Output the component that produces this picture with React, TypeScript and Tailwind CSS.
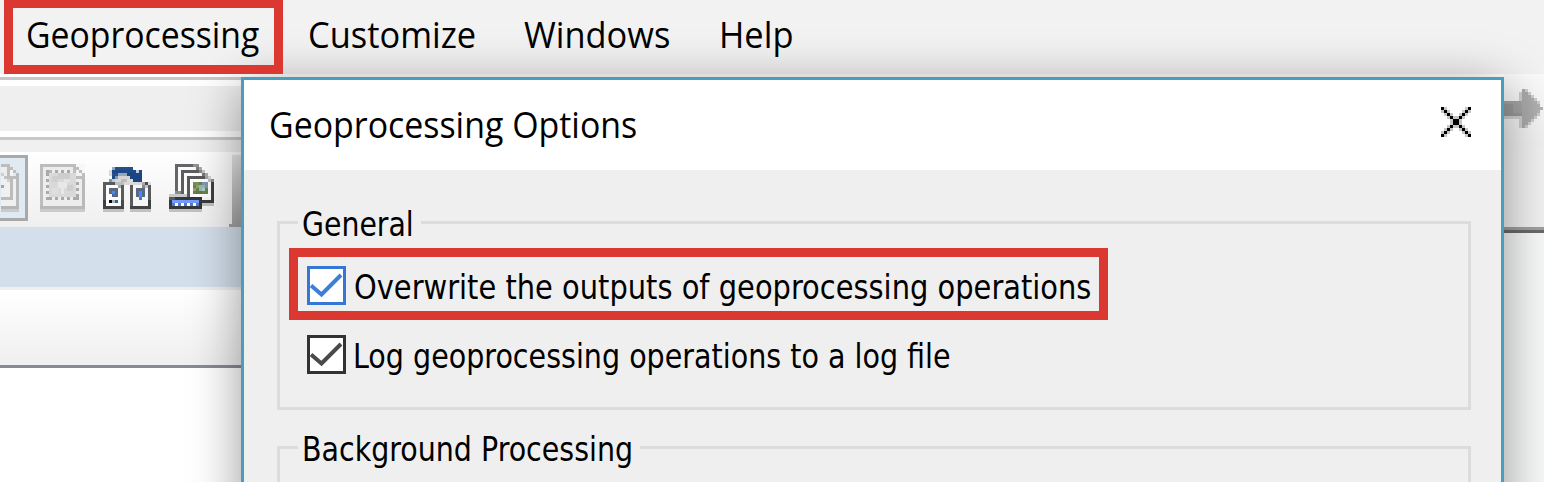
import type { ReactNode } from "react";

type Px = [number, number, number, number, string];

function PixelArt({ cols, rows, px, className }: { cols: number; rows: number; px: Px[]; className: string }) {
  return (
    <svg viewBox={`0 0 ${cols} ${rows}`} className={className} shapeRendering="crispEdges" aria-hidden="true">
      {px.map(([x, y, w, h, fill], i) => (
        <rect key={i} x={x} y={y} width={w} height={h} fill={fill} />
      ))}
    </svg>
  );
}

const layoutPage: Px[] = [
  [0, 0, 3, 1, "#bdbdbd"], [0, 1, 2, 13, "#ededed"], [0, 4, 5, 10, "#f0f0f0"],
  [2, 0, 1, 4, "#bdbdbd"], [3, 1, 1, 1, "#bdbdbd"], [3, 2, 1, 2, "#f4f4f4"], [4, 2, 1, 1, "#bdbdbd"],
  [2, 4, 3, 1, "#bdbdbd"], [5, 3, 1, 12, "#bababa"], [0, 14, 6, 1, "#b6b6b6"], [0, 15, 6, 1, "#c5cbd0"],
  [0, 3, 1, 1, "#cfcfcf"], [1, 4, 1, 1, "#c4c4c4"], [2, 5, 1, 1, "#d0d0d0"],
  [3, 5, 1, 7, "#bcbcbc"], [0, 11, 4, 1, "#bcbcbc"], [0, 7, 1, 1, "#a5a5a5"],
];

const selectPage: Px[] = [
  [1, 1, 13, 13, "#ededed"], [0, 0, 12, 1, "#bdbdbd"], [0, 0, 1, 15, "#bdbdbd"],
  [14, 4, 1, 11, "#bababa"], [0, 14, 15, 1, "#b8b8b8"], [0, 15, 15, 1, "#cbcbcb"],
  [12, 0, 3, 3, "#f7f7f7"], [11, 0, 1, 4, "#bdbdbd"], [12, 1, 1, 1, "#bdbdbd"], [13, 2, 1, 1, "#bdbdbd"],
  [12, 2, 1, 1, "#f2f2f2"], [12, 3, 2, 1, "#f2f2f2"], [14, 3, 1, 1, "#bdbdbd"], [11, 4, 4, 1, "#bdbdbd"],
  [3, 3, 9, 8, "#d9d9d9"], [4, 4, 2, 2, "#cfcfcf"], [6, 3, 4, 2, "#cdcdcd"], [6, 6, 3, 2, "#e8e8e8"],
  [8, 5, 2, 1, "#e3e3e3"], [7, 8, 1, 2, "#e8e8e8"], [9, 7, 2, 2, "#cecece"], [4, 8, 2, 2, "#dfdfdf"],
  [2, 2, 1, 2, "#a9a9a9"], [3, 2, 1, 1, "#b5b5b5"], [5, 2, 1, 1, "#a9a9a9"], [7, 2, 1, 1, "#a9a9a9"], [9, 2, 1, 1, "#a9a9a9"],
  [2, 5, 1, 1, "#a9a9a9"], [2, 7, 1, 1, "#a9a9a9"], [2, 9, 1, 1, "#a9a9a9"], [2, 11, 2, 1, "#a9a9a9"],
  [5, 11, 1, 1, "#a9a9a9"], [7, 11, 1, 1, "#a9a9a9"], [9, 11, 1, 1, "#a9a9a9"], [11, 11, 2, 1, "#a9a9a9"],
  [12, 6, 1, 1, "#a9a9a9"], [12, 8, 1, 1, "#a9a9a9"], [12, 10, 1, 1, "#a9a9a9"],
];

const transfer: Px[] = [
  [4, 1, 6, 1, "#23508a"], [3, 2, 8, 1, "#1d4a86"], [12, 2, 1, 1, "#1d4a86"], [11, 2, 1, 1, "#bccbe0"],
  [3, 1, 1, 1, "#91a7c6"], [2, 2, 1, 2, "#d5dbe3"], [3, 3, 2, 1, "#23508a"], [5, 3, 3, 1, "#96a5b8"], [8, 3, 5, 1, "#1b4580"],
  [3, 4, 1, 1, "#1d4a86"], [4, 4, 1, 1, "#8096b3"], [5, 4, 4, 1, "#d4d4d4"], [9, 4, 4, 1, "#1b4580"],
  [2, 5, 1, 1, "#7d94b5"], [3, 5, 1, 1, "#c4c9d0"], [4, 5, 2, 1, "#d6d6d6"], [6, 5, 2, 1, "#bbbbbb"], [8, 5, 2, 1, "#dddddd"], [10, 5, 3, 1, "#1b4580"],
  [0, 6, 7, 9, "#5b5b5d"], [1, 7, 5, 7, "#fdfdfd"], [4, 6, 3, 1, "#bdbdbd"], [5, 7, 1, 1, "#a5a5a5"], [0, 12, 1, 3, "#3e3f41"], [6, 12, 1, 3, "#48494b"], [0, 14, 7, 1, "#434446"],
  [2, 8, 3, 2, "#586986"], [3, 10, 2, 1, "#586986"], [3, 9, 1, 1, "#3f8cff"],
  [2, 12, 1, 1, "#080808"], [3, 12, 1, 1, "#aeb2b6"], [4, 12, 1, 1, "#31669b"], [0, 15, 7, 1, "#c1c1c1"],
  [9, 6, 7, 9, "#5b5b5d"], [10, 7, 5, 7, "#f6f6f6"], [7, 6, 6, 1, "#d9d9d9"], [13, 6, 1, 1, "#a8a8a8"], [14, 6, 1, 1, "#4b4b4b"], [15, 6, 1, 1, "#dddddd"], [13, 7, 1, 1, "#898989"], [14, 7, 1, 1, "#c2c2c2"],
  [11, 8, 3, 3, "#586986"], [12, 9, 1, 2, "#3f8cff"], [12, 11, 1, 1, "#657590"], [15, 12, 1, 3, "#3e3f41"], [9, 14, 7, 1, "#434446"], [9, 15, 7, 1, "#c1c1c1"],
];

const pageStack: Px[] = [
  [2, 0, 8, 11, "#666668"], [3, 1, 7, 10, "#fbfbfb"], [8, 0, 2, 1, "#929292"], [10, 1, 1, 1, "#a8a8a8"], [9, 1, 1, 1, "#7b7b7b"],
  [4, 2, 8, 9, "#5d5d5f"], [5, 3, 7, 8, "#fbfbfb"], [10, 2, 1, 1, "#898989"], [11, 2, 1, 1, "#c2c2c2"], [11, 3, 1, 1, "#777777"], [12, 3, 1, 1, "#aaaaaa"],
  [6, 4, 7, 8, "#58595b"], [12, 4, 1, 1, "#a4a4a4"], [7, 5, 7, 7, "#fefefe"], [13, 4, 1, 1, "#d0d0d0"],
  [13, 5, 1, 1, "#bdbdbd"], [14, 5, 1, 1, "#8b8b8b"], [14, 6, 1, 7, "#3e3f41"], [11, 12, 4, 1, "#3b3c3e"], [11, 11, 3, 1, "#f8f8f8"], [11, 13, 4, 1, "#c1c1c1"],
  [8, 6, 5, 4, "#698249"], [8, 6, 2, 1, "#7b9055"], [11, 6, 2, 2, "#8095b5"], [10, 7, 2, 2, "#90b7b6"], [9, 7, 1, 1, "#8ba65f"], [11, 8, 1, 1, "#a5cfc7"], [9, 9, 2, 1, "#647a36"], [8, 8, 1, 1, "#92a169"],
  [2, 9, 2, 1, "#8c8c8c"], [0, 10, 6, 1, "#c9c9c9"],
  [0, 11, 11, 4, "#35373b"], [0, 11, 2, 1, "#58595b"], [1, 12, 9, 1, "#719bff"], [1, 13, 9, 1, "#527dc5"],
  [2, 13, 1, 1, "#ffffff"], [4, 13, 1, 1, "#ffffff"], [6, 13, 1, 1, "#ffffff"], [8, 13, 1, 1, "#ffffff"], [0, 15, 11, 1, "#c1c1c1"],
];

const forwardArrow: Px[] = [
  [0, 4, 6, 5, "#999999"], [0, 4, 6, 1, "#a4a4a4"], [3, 5, 4, 3, "#a3a3a3"], [0, 9, 6, 1, "#d0d0d0"], [5, 1, 1, 3, "#cdcdcd"], [5, 9, 1, 4, "#cdcdcd"],
  [6, 0, 1, 13, "#a9a9a9"], [7, 1, 1, 11, "#a9a9a9"], [8, 2, 1, 9, "#ababab"], [9, 3, 1, 7, "#adadad"], [10, 4, 1, 5, "#afafaf"], [11, 5, 1, 3, "#b1b1b1"], [12, 6, 1, 1, "#b4b4b4"],
  [7, 0, 1, 1, "#cccccc"], [8, 1, 1, 1, "#cccccc"], [9, 2, 1, 1, "#cccccc"], [10, 3, 1, 1, "#cccccc"], [11, 4, 1, 1, "#cccccc"],
  [7, 12, 1, 1, "#cccccc"], [8, 11, 1, 1, "#cccccc"], [9, 10, 1, 1, "#cccccc"], [10, 9, 1, 1, "#cccccc"], [11, 8, 1, 1, "#cccccc"],
];

const closeCross: Px[] = Array.from({ length: 9 }).flatMap((_, i): Px[] => [
  [i + 1, i, 1, 1, "#c6c6c6"], [i, i + 1, 1, 1, "#c6c6c6"],
  [8 - i, i, 1, 1, "#c6c6c6"], [9 - i, i + 1, 1, 1, "#c6c6c6"],
]).concat(
  Array.from({ length: 10 }).flatMap((_, i): Px[] => [[i, i, 1, 1, "#000000"], [9 - i, i, 1, 1, "#000000"]]),
);

function Checkbox({ label, accent, textClass }: { label: string; accent: boolean; textClass: string }) {
  return (
    <label className="flex h-[39px] items-start">
      <span className={accent ? "size-[39px] shrink-0 border-[3px] border-[#3477d4] bg-white" : "size-[39px] shrink-0 border-[3px] border-[#323232] bg-white"}>
        <svg viewBox="0 0 33 33" className="size-[33px]" fill="none" stroke={accent ? "#3d7fd6" : "#4a4a4a"} strokeWidth="4">
          <path d="M1 16.5 L11.5 25.5 L31 6" />
        </svg>
      </span>
      <span className={textClass}>{label}</span>
    </label>
  );
}

function Group({ title, titleClass, className, children }: { title: string; titleClass: string; className: string; children?: ReactNode }) {
  return (
    <section className={className}>
      <div className="flex h-[39px] items-start">
        <span className="mt-[18px] h-[3px] w-[21px] bg-[#dcdcdc]" />
        <h2 className={titleClass}>{title}</h2>
        <span className="mt-[18px] h-[3px] flex-1 bg-[#dcdcdc]" />
      </div>
      <div className="-mt-[18px] flex-1 border-x-[3px] border-b-[3px] border-[#dcdcdc]">{children}</div>
    </section>
  );
}

export default function App() {
  return (
    <div className="relative flex h-[482px] w-[1544px] flex-col overflow-hidden bg-white font-['Open_Sans',sans-serif] text-black">
      <nav className="flex h-[74px] shrink-0 bg-[#f2f2f2] pl-[4px]">
        <div className="relative z-10 h-[74px] w-[279px] border-x-9 border-t-8 border-b-9 border-[#db3832] pl-[13px]">
          <span className="-mt-px block origin-left scale-x-[0.912] text-[37px] leading-[53px] whitespace-nowrap">Geoprocessing</span>
        </div>
        <div className="relative z-10 flex pt-[7px] pl-[25px] text-[37px] leading-[53px] whitespace-nowrap">
          <span className="w-[216px] origin-left scale-x-[0.93]">Customize</span>
          <span className="w-[195px] origin-left scale-x-[0.93]">Windows</span>
          <span className="origin-left scale-x-[0.93]">Help</span>
        </div>
      </nav>
      <div className="flex flex-1 justify-between">
        <div className="flex w-[241px] flex-col">
          <div className="mt-[3px] h-[3px] bg-[#c8c8c8]" />
          <div className="mt-[6px] h-[45px] bg-[#efefef]" />
          <div className="mt-[6px] h-[3px] bg-[#c8c8c8]" />
          <div className="h-[12px] bg-[#f0f0f0]" />
          <div className="flex h-[75px] bg-gradient-to-b from-white to-[#efefef]">
            <div className="mt-[3px] h-[66px] w-[28px] border-y-[3px] border-r-[3px] border-[#a9a9a9] bg-[#e0eaf3] pt-[6px]">
              <PixelArt cols={6} rows={16} px={layoutPage} className="ml-[1px] h-[48px] w-[18px]" />
            </div>
            <PixelArt cols={15} rows={16} px={selectPage} className="mt-[12px] ml-[12px] h-[48px] w-[45px]" />
            <PixelArt cols={16} rows={16} px={transfer} className="mt-[12px] ml-[18px] h-[48px] w-[48px]" />
            <PixelArt cols={15} rows={16} px={pageStack} className="mt-[12px] ml-[18px] h-[48px] w-[45px]" />
            <div className="ml-auto h-[3px] w-[3px] self-end bg-[#a0a0a0]" />
            <div className="mt-[3px] w-[9px] bg-gradient-to-b from-[#e8e8e8] to-[#a0a0a0]" />
          </div>
          <div className="h-[60px] bg-[#d3dfeb]" />
          <div className="h-[3px] bg-[#f0f0f0]" />
          <div className="h-[75px] bg-gradient-to-b from-white to-[#efefef]" />
          <div className="h-[3px] bg-[#868a94]" />
        </div>
        <div className="flex w-[40px] flex-col bg-[#f6f9f8]">
          <div className="h-[73px] bg-gradient-to-b from-[#fafafa] to-[#f0f0f0] pt-[15px]">
            <PixelArt cols={13} rows={13} px={forwardArrow} className="h-[39px] w-[39px]" />
          </div>
          <div className="h-[80px] bg-[#f1f1f1]" />
          <div className="h-[3px] bg-[#a0a0a0]" />
          <div className="h-[3px] bg-[#696969]" />
        </div>
      </div>
      <div className="absolute top-[77px] left-[241px] flex h-[460px] w-[1263px] flex-col border-[3px] border-[#4a9dbd] bg-[#efefef] shadow-[0_10px_48px_rgba(0,0,0,0.4)]">
        <header className="flex h-[90px] shrink-0 items-start justify-between bg-white pr-[30px] pl-[25px]">
          <h1 className="mt-[17px] origin-left scale-x-[0.916] text-[37px] leading-[53px] whitespace-nowrap">Geoprocessing Options</h1>
          <button aria-label="Close" className="mt-[27px]">
            <PixelArt cols={10} rows={10} px={closeCross} className="size-[30px]" />
          </button>
        </header>
        <div className="flex flex-col pr-[30px] pl-[33px] font-['DejaVu_Sans_Condensed','DejaVu_Sans',sans-serif]">
          <Group
            title="General"
            titleClass="mt-[2px] ml-[4px] w-[119px] origin-left scale-x-[0.955] text-[33px] leading-[39px] whitespace-nowrap"
            className="mt-[33px] flex h-[207px] flex-col"
          >
            <div className="mt-[24px] ml-[9px] h-[72px] w-[819px] border-9 border-[#db3832] pt-[9px] pl-[9px]">
              <Checkbox
                accent
                label="Overwrite the outputs of geoprocessing operations"
                textClass="mt-[2px] ml-[8px] origin-left scale-x-[0.974] text-[33px] leading-[39px] whitespace-nowrap"
              />
            </div>
            <div className="mt-[15px] ml-[27px]">
              <Checkbox
                accent={false}
                label="Log geoprocessing operations to a log file"
                textClass="mt-[2px] ml-[7px] origin-left scale-x-[0.962] text-[33px] leading-[39px] whitespace-nowrap"
              />
            </div>
          </Group>
          <Group
            title="Background Processing"
            titleClass="mt-[2px] ml-[4px] w-[338px] origin-left scale-x-[0.96] text-[33px] leading-[39px] whitespace-nowrap"
            className="mt-[18px] flex h-[100px] flex-col"
          />
        </div>
      </div>
    </div>
  );
}
